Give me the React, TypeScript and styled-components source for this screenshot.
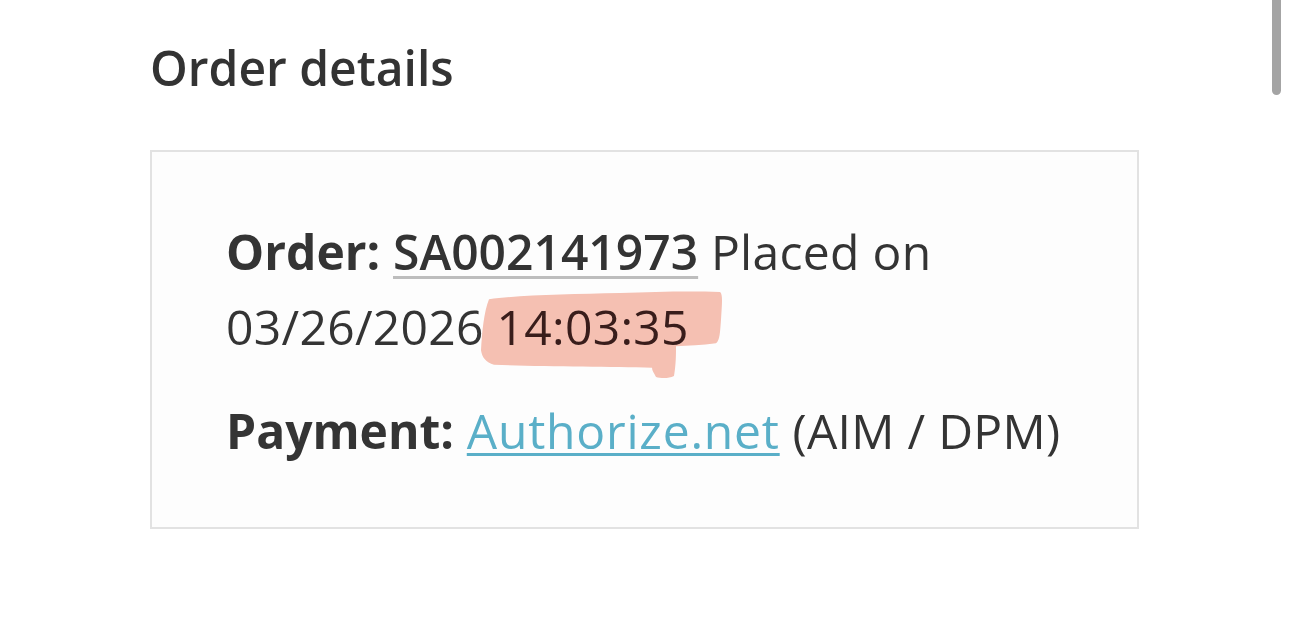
import React from 'react';
import styled, { createGlobalStyle } from 'styled-components';

const GlobalStyle = createGlobalStyle`
  html, body {
    margin: 0;
    padding: 0;
    background: #ffffff;
  }
  body {
    font-family: 'Open Sans', 'Noto Sans', sans-serif;
    color: #343434;
  }
`;

const App = () => {
  return (
    <>
      <GlobalStyle />
      <Page>
        <Title>Order details</Title>
        <DetailsBox>
          <Line>
            <Label>Order:</Label> <OrderLink href="#">SA002141973</OrderLink> Placed on
            03/26/2026{' '}
            <Marked>
              <Marker viewBox="0 0 244 86" preserveAspectRatio="none">
                <path
                  d="M9 8 C40 4 90 3 140 2 C175 1 205 0 240 1 C243 3 242 12 241 28 C240 40 240 48 236 51 C222 53 208 53 196 54 C196 62 196 72 194 83 C188 86 180 85 176 84 C174 80 172 78 172 75 C130 74 60 74 14 72 C6 70 2 65 1 58 C2 40 4 20 9 8 Z"
                  fill="#f7c2b4"
                />
              </Marker>
              14:03:35
            </Marked>
          </Line>
          <Line $gap>
            <Label>Payment:</Label> <PaymentLink href="#">Authorize.net</PaymentLink> (AIM / DPM)
          </Line>
        </DetailsBox>
      </Page>
      <ScrollThumb />
    </>
  );
};
export default App;

const Page = styled.div`
  padding: 37px 0 0 150px;
  width: 989px;
`;

const Title = styled.h1`
  margin: 0 0 51px;
  font-size: 48px;
  line-height: 62px;
  font-weight: 600;
  color: #333333;
`;

const DetailsBox = styled.div`
  border: 2px solid #e2e2e2;
  background: #fdfdfd;
  padding: 62px 60px 59px 74px;
`;

const Line = styled.p<{ $gap?: boolean }>`
  margin: ${({ $gap }) => ($gap ? '29px 0 0' : '0')};
  font-size: 48px;
  line-height: 75px;
  font-weight: 400;
  letter-spacing: 0.3px;
  color: #343434;
`;

const Label = styled.span`
  font-weight: 700;
  letter-spacing: 0;
`;

const OrderLink = styled.a`
  color: #333333;
  font-weight: 600;
  letter-spacing: 0;
  text-decoration: underline;
  text-decoration-color: #bdbdbd;
  text-decoration-thickness: 3px;
  text-underline-offset: 6px;
`;

const PaymentLink = styled.a`
  color: #5aafc8;
  letter-spacing: 0.8px;
  text-decoration: underline;
  text-decoration-thickness: 3px;
  text-underline-offset: 4px;
`;

const Marked = styled.span`
  position: relative;
  color: #3b2626;
`;

const Marker = styled.svg`
  position: absolute;
  left: -17px;
  top: -3px;
  width: 244px;
  height: 88px;
  mix-blend-mode: multiply;
  pointer-events: none;
`;

const ScrollThumb = styled.div`
  position: fixed;
  top: 0;
  right: 9px;
  width: 9px;
  height: 95px;
  border-radius: 0 0 5px 5px;
  background: #a4a4a4;
`;
